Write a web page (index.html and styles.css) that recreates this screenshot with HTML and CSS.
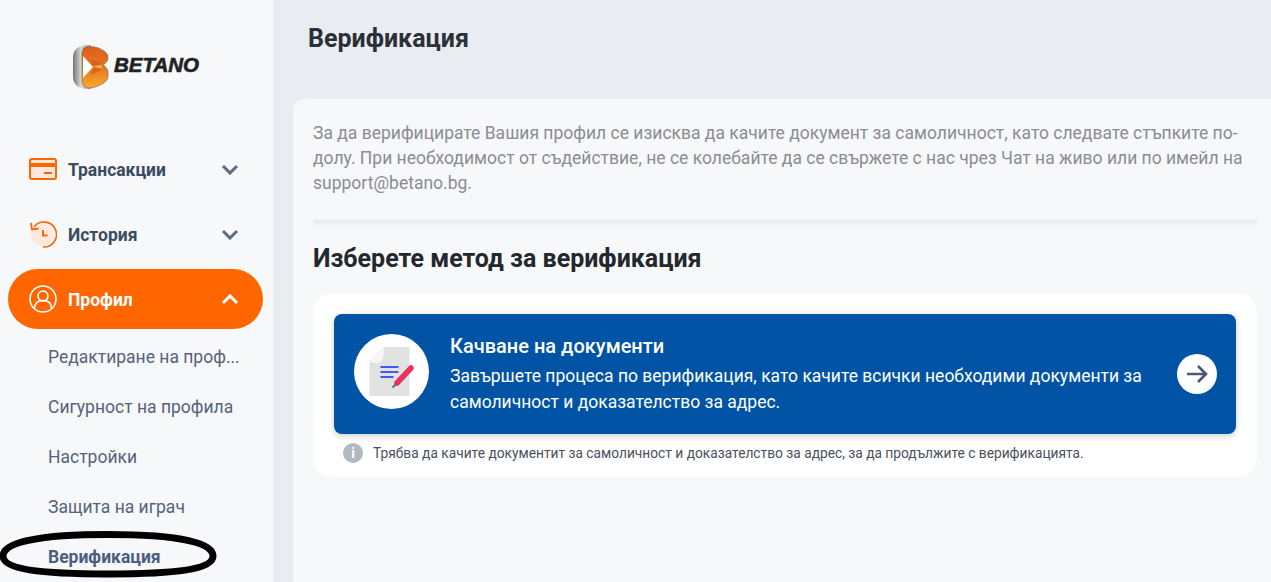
FILE: index.html
```html
<!DOCTYPE html>
<html lang="en">
<head>
    <meta charset="UTF-8">
    <title>Верификация</title>
    <link rel="stylesheet" href="styles.css">
</head>
<body>
    <div class="page">
        <aside class="sidebar">
            <div class="logo">
                <svg class="logo-mark" width="38" height="46" viewBox="0 0 38 46">
                    <defs>
                        <linearGradient id="steel" x1="0" x2="1" y1="0" y2="0">
                            <stop offset="0" stop-color="#77746f"/>
                            <stop offset="0.45" stop-color="#d8d8d6"/>
                            <stop offset="1" stop-color="#a3a19d"/>
                        </linearGradient>
                        <linearGradient id="flame" x1="0" x2="0" y1="0" y2="1">
                            <stop offset="0" stop-color="#dc5f1a"/>
                            <stop offset="0.5" stop-color="#e8761f"/>
                            <stop offset="1" stop-color="#f9a92e"/>
                        </linearGradient>
                    </defs>
                    <path d="M16 1C6 1 1 6 1 13v20c0 7 5 12 15 12h3V1z" fill="url(#steel)"/>
                    <path d="M14 3c6-1 13 0 18 4 3 2 4 4 4 7 0 3-2 5-5 7 3 2 5 4 5 7v4c0 4-3 7-8 9-4 2-7 3-12 3-3 0-5-3-6-6V10c0-3 1-6 4-7z" fill="url(#flame)" stroke="#55504a" stroke-width=".5"/>
                    <path d="M11 12l10 11-10 11z" fill="#fff"/>
                    <path d="M21 22l10-1-2 2 2 2z" fill="#f6b263"/>
                    <path d="M19 15l12 5-10 2zM19 31l12-6-10-1z" fill="#c9561a" opacity=".6"/>
                </svg>
                <span class="logo-text">BETANO</span>
            </div>

            <nav class="nav">
                <a class="nav-item">
                    <svg class="nav-icon" width="28" height="22" viewBox="0 0 28 22">
                        <rect x="1" y="1" width="26" height="20" rx="2" fill="#ffe9dc" stroke="#ff6600" stroke-width="2"/>
                        <rect x="1" y="5" width="26" height="4" fill="#ff6600"/>
                        <rect x="15" y="14" width="8" height="2" fill="#ff6600"/>
                    </svg>
                    <span class="nav-label">Трансакции</span>
                    <svg class="chevron" width="18" height="11" viewBox="0 0 18 11"><path d="M2 2l7 7 7-7" fill="none" stroke="#5b6b84" stroke-width="3"/></svg>
                </a>
                <a class="nav-item">
                    <svg class="nav-icon" width="28" height="28" viewBox="0 0 28 28">
                        <circle cx="13" cy="15" r="11" fill="#ffe9dc"/>
                        <path d="M5 7A12.500 12.500 0 1 1 14 27" fill="none" stroke="#ff6600" stroke-width="1.6"/>
                        <path d="M2 3l1 6.500 6.500-1" fill="none" stroke="#ff6600" stroke-width="1.800"/>
                        <path d="M14 10v5.500h4.500" fill="none" stroke="#ff6600" stroke-width="2"/>
                    </svg>
                    <span class="nav-label">История</span>
                    <svg class="chevron" width="18" height="11" viewBox="0 0 18 11"><path d="M2 2l7 7 7-7" fill="none" stroke="#5b6b84" stroke-width="3"/></svg>
                </a>
                <a class="nav-item active">
                    <svg class="nav-icon" width="28" height="28" viewBox="0 0 28 28">
                        <circle cx="14" cy="14" r="13" fill="none" stroke="#fff" stroke-width="1.6"/>
                        <circle cx="14" cy="11" r="5" fill="none" stroke="#fff" stroke-width="1.6"/>
                        <path d="M5.500 24c0-6 3.500-8.500 8.500-8.500s8.500 2.500 8.500 8.500" fill="none" stroke="#fff" stroke-width="1.6"/>
                    </svg>
                    <span class="nav-label">Профил</span>
                    <svg class="chevron" width="18" height="11" viewBox="0 0 18 11"><path d="M2 9l7-7 7 7" fill="none" stroke="#fff" stroke-width="3"/></svg>
                </a>
                <ul class="subnav">
                    <li>Редактиране на проф...</li>
                    <li>Сигурност на профила</li>
                    <li>Настройки</li>
                    <li>Защита на играч</li>
                    <li class="current">Верификация</li>
                </ul>
            </nav>

            <svg class="scribble" width="222" height="50" viewBox="0 0 222 50">
                <path d="M4 25C4 11 40 3.500 109 3.500S214 11 214 25c0 13-36 18-105 18S4 38 4 25z" fill="none" stroke="#000" stroke-width="7"/>
            </svg>
        </aside>

        <main class="content">
            <h1 class="page-title">Верификация</h1>
            <section class="panel">
                <p class="intro">За да верифицирате Вашия профил се изисква да качите документ за самоличност, като следвате стъпките по-долу. При необходимост от съдействие, не се колебайте да се свържете с нас чрез Чат на живо или по имейл на support@betano.bg.</p>
                <hr class="divider">
                <h2 class="section-title">Изберете метод за верификация</h2>
                <div class="method-box">
                    <div class="method-card">
                        <div class="doc-circle">
                            <svg width="50" height="50" viewBox="0 0 50 50">
                                <path d="M16.500 0h26v49h-40V14z" fill="#e2e2e2"/>
                                <path d="M16.500 0c1 6 0 12-3 15-3 2-8 1-11-1z" fill="#f6f6f6"/>
                                <path d="M13.500 20h18M13.500 25h18M13.500 30h13" stroke="#3f5cf0" stroke-width="2"/>
                                <path d="M30 36l14-15" stroke="#e8335f" stroke-width="5.500" stroke-linecap="round"/>
                                <path d="M28.500 37.500l-3 3" stroke="#5a6a90" stroke-width="2"/>
                            </svg>
                        </div>
                        <div class="method-text">
                            <h3>Качване на документи</h3>
                            <p>Завършете процеса по верификация, като качите всички необходими документи за самоличност и доказателство за адрес.</p>
                        </div>
                        <div class="arrow-circle">
                            <svg width="22" height="18" viewBox="0 0 22 18"><path d="M1 9h19M12 1l8 8-8 8" fill="none" stroke="#4b5870" stroke-width="2.600"/></svg>
                        </div>
                    </div>
                    <div class="method-note">
                        <span class="info-icon">i</span>
                        <span>Трябва да качите документит за самоличност и доказателство за адрес, за да продължите с верификацията.</span>
                    </div>
                </div>
            </section>
        </main>
    </div>
</body>
</html>
```

FILE: styles.css
```css
:root {
    --orange: #ff6600;
    --blue: #0053a5;
    --side-bg: #f7f8fa;
    --main-bg: #e9ecf1;
    --nav-text: #3c4a60;
}

html, body {
    margin: 0;
    height: 100%;
    overflow: hidden;
}

body {
    font-family: 'Roboto', 'Liberation Sans', sans-serif;
    background: var(--main-bg);
}

.page {
    display: flex;
    height: 582px;
    overflow: hidden;
}

.sidebar {
    width: 273px;
    flex-shrink: 0;
    background: var(--side-bg);
    position: relative;
}

.logo {
    display: flex;
    align-items: center;
    gap: 4px;
    height: 46px;
    padding: 44px 0 0 72px;
}

.logo-text {
    font-family: 'Liberation Sans', sans-serif;
    font-weight: 700;
    font-style: italic;
    font-size: 20.5px;
    color: #222;
    -webkit-text-stroke: 0.6px #222;
    margin-bottom: 4px;
}

.nav {
    margin-top: 49px;
}

.nav-item {
    display: flex;
    align-items: center;
    width: 255px;
    height: 60px;
    margin: 0 0 5px 8px;
    padding: 0 24px 0 21px;
    box-sizing: border-box;
    border-radius: 30px;
    color: var(--nav-text);
    font-size: 17.5px;
    font-weight: 700;
}

.nav-item.active {
    background: var(--orange);
    color: #fff;
    margin-bottom: 0;
}

.nav-icon {
    width: 28px;
    flex-shrink: 0;
}

.nav-label {
    flex: 1;
    margin-left: 11px;
    padding-top: 2px;
}

.subnav {
    list-style: none;
    margin: 3px 0 0;
    padding: 0 0 0 48px;
}

.subnav li {
    height: 50px;
    line-height: 50px;
    font-size: 17.5px;
    color: #55637a;
    white-space: nowrap;
}

.subnav li.current {
    font-weight: 700;
    color: #4a5f80;
}

.scribble {
    position: absolute;
    left: -1px;
    top: 531px;
}

.content {
    flex: 1;
    padding-left: 20px;
    min-width: 0;
}

.page-title {
    margin: 0;
    height: 99px;
    padding: 24px 0 0 15px;
    box-sizing: border-box;
    font-size: 25px;
    line-height: 30px;
    font-weight: 700;
    color: #2b3038;
}

.panel {
    background: var(--side-bg);
    border-radius: 12px 0 0 0;
    padding: 22px 14px 0 20px;
    height: 483px;
    box-sizing: border-box;
}

.intro {
    margin: 0;
    font-size: 17.5px;
    line-height: 25px;
    color: #8a8d93;
}

.divider {
    margin: 24px 0 0;
    border: 1px solid #e0e4ec;
    border-radius: 2px;
    height: 1px;
    background: #f3f4f8;
    box-shadow: 0 2px 4px rgba(0,0,0,0.05);
}

.section-title {
    margin: 21px 0 0;
    font-size: 25px;
    line-height: 30px;
    font-weight: 700;
    color: #23272e;
}

.method-box {
    margin-top: 19px;
    background: #fff;
    border-radius: 20px;
    padding: 21px 21px 0;
    height: 184px;
    box-sizing: border-box;
}

.method-card {
    display: flex;
    align-items: center;
    height: 120px;
    padding: 0 19px 0 20px;
    box-sizing: border-box;
    background: var(--blue);
    border-radius: 8px;
    box-shadow: 0 2px 6px rgba(0,0,0,0.2);
    color: #fff;
}

.doc-circle {
    width: 75px;
    height: 75px;
    flex-shrink: 0;
    margin-bottom: 5px;
    border-radius: 50%;
    background: #fff;
    display: flex;
    align-items: center;
    justify-content: center;
}

.method-text {
    flex: 1;
    margin-left: 21px;
}

.method-text h3 {
    margin: 0 0 5px;
    font-size: 20px;
    line-height: 24px;
    font-weight: 500;
}

.method-text p {
    margin: 0;
    font-size: 17.5px;
    line-height: 26px;
}

.arrow-circle {
    width: 40px;
    height: 40px;
    flex-shrink: 0;
    border-radius: 50%;
    background: #fff;
    display: flex;
    align-items: center;
    justify-content: center;
}

.method-note {
    display: flex;
    align-items: center;
    gap: 10px;
    margin: 9px 0 0 9px;
    font-size: 13.75px;
    line-height: 20px;
    color: #4a5160;
}

.info-icon {
    width: 20px;
    height: 20px;
    border-radius: 50%;
    background: #b3b8c2;
    color: #fff;
    font-size: 14px;
    font-weight: 700;
    text-align: center;
}
```
